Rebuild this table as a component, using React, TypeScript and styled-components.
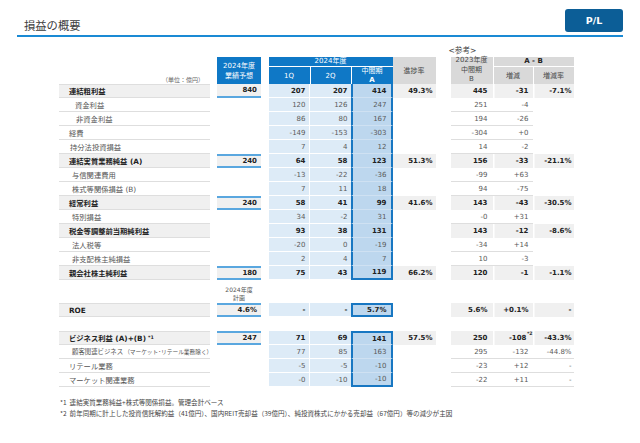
import React from 'react';
import styled, { createGlobalStyle, css } from 'styled-components';

const GlobalStyle = createGlobalStyle`
  html, body { margin: 0; padding: 0; background: #ffffff; }
  body { font-family: "DejaVu Sans", "Noto Sans CJK JP", sans-serif; -webkit-font-smoothing: antialiased; }
`;

const GRID = '151px 7px 44px 7.5px 41px 41px 42px 43px 15px 42px 40px 41px';
const BLUE = '#0f78c6';
const MIDBORDER = '#1877c2';
const LINEBLUE = '#5aa7df';
const GRAYBG = '#f0f0f0';
const HEADGRAY = '#d9d9d9';

const Page = styled.div`
  width: 640px;
  height: 443px;
  overflow: hidden;
`;

const TitleBar = styled.header`
  display: flex;
  justify-content: space-between;
  align-items: flex-start;
  box-sizing: border-box;
  height: 37px;
  margin: 0 17px;
  padding-top: 9px;
  border-bottom: 2px solid #1a8ad4;
`;

const Title = styled.h1`
  margin: 10px 0 0 7px;
  font-family: "Noto Sans CJK JP", sans-serif;
  font-weight: 400;
  font-size: 11.3px;
  line-height: 13px;
  color: #3c3c3c;
`;

const PLButton = styled.div`
  width: 58px;
  height: 23px;
  border-radius: 3px;
  background: #0c5e97;
  color: #ffffff;
  font-family: "DejaVu Sans", sans-serif;
  font-weight: 700;
  font-size: 9.5px;
  display: flex;
  align-items: center;
  justify-content: center;
`;

const Table = styled.div`
  margin-left: 59px;
  width: 515px;
`;

const GridRow = styled.div<{ $h: number }>`
  display: grid;
  grid-template-columns: ${GRID};
  height: ${(p) => p.$h}px;
`;

const CaptionCell = styled.div`
  grid-column: 10 / 13;
  align-self: end;
  margin-left: -2px;
  font-family: "DejaVu Sans", "Noto Sans CJK JP", sans-serif;
  font-size: 7.6px;
  line-height: 13px;
  color: #444;
`;

const HeaderGrid = styled.div`
  display: grid;
  grid-template-columns: ${GRID};
  grid-template-rows: 9px 18px;
  height: 27px;
`;

const HeadCell = styled.div<{ $col: string; $row: string; $tone: 'blue' | 'gray'; $sepLeft?: boolean; $sepTop?: boolean; $bold?: boolean; $lh?: number }>`
  grid-column: ${(p) => p.$col};
  grid-row: ${(p) => p.$row};
  box-sizing: border-box;
  display: flex;
  flex-direction: column;
  align-items: center;
  justify-content: center;
  text-align: center;
  background: ${(p) => (p.$tone === 'blue' ? BLUE : HEADGRAY)};
  color: ${(p) => (p.$tone === 'blue' ? '#ffffff' : p.$bold ? '#222' : '#4a4a4a')};
  font-size: 7px;
  font-weight: ${(p) => (p.$bold ? 700 : 400)};
  line-height: ${(p) => p.$lh ?? 10}px;
  white-space: nowrap;
  ${(p) => p.$sepLeft && css`border-left: 1px solid #ffffff;`}
  ${(p) => p.$sepTop && css`border-top: 1px solid #ffffff;`}
`;

const UnitCell = styled.div`
  grid-column: 1;
  grid-row: 1 / 3;
  align-self: end;
  justify-self: end;
  padding: 0 6px 1px 0;
  font-family: "Noto Sans CJK JP", sans-serif;
  font-size: 6px;
  line-height: 7px;
  color: #666;
`;

const Gap = styled.div``;

const numBase = css`
  box-sizing: border-box;
  display: flex;
  align-items: center;
  justify-content: flex-end;
  font-size: 7px;
  white-space: nowrap;
`;

const LabelCell = styled.div<{ $bold?: boolean; $indent: number; $top?: boolean }>`
  box-sizing: border-box;
  display: flex;
  align-items: center;
  padding-left: ${(p) => p.$indent}px;
  background: ${(p) => (p.$bold ? GRAYBG : '#ffffff')};
  border-bottom: 1px solid #dedede;
  ${(p) => p.$top && css`border-top: 1px solid #dedede;`}
  font-size: 7.3px;
  font-weight: ${(p) => (p.$bold ? 700 : 400)};
  color: ${(p) => (p.$bold ? '#222' : '#555')};
  white-space: nowrap;
`;

const SmallMain = styled.span`
  font-size: 6.4px;
`;

const SmallParen = styled.span`
  font-size: 5.7px;
  margin-left: 1px;
`;

const Sup = styled.sup`
  font-size: 4.8px;
  font-weight: 700;
  vertical-align: top;
  line-height: 1;
  margin-left: 2px;
  margin-top: 1px;
`;

const FcCell = styled.div<{ $filled?: boolean; $noTop?: boolean }>`
  ${numBase};
  padding-right: 4px;
  font-weight: 700;
  color: #222;
  ${(p) =>
    p.$filled &&
    css`
      background: ${GRAYBG};
      border-bottom: 2px solid ${LINEBLUE};
      border-top: ${p.$noTop ? '0' : `2px solid ${LINEBLUE}`};
    `}
`;

const FcPlanHead = styled.div`
  grid-column: 3;
  padding-top: 6px;
  text-align: center;
  font-size: 6px;
  line-height: 7.5px;
  color: #555;
  white-space: nowrap;
`;

const QCell = styled.div<{ $bold?: boolean; $first?: boolean }>`
  ${numBase};
  padding-right: 3px;
  background: #ddebf7;
  border-bottom: 1px solid #ffffff;
  ${(p) => p.$first && css`border-right: 1px solid #ffffff;`}
  font-weight: ${(p) => (p.$bold ? 700 : 400)};
  color: ${(p) => (p.$bold ? '#222' : '#5a5a5a')};
`;

const MidCell = styled.div<{ $bold?: boolean; $top?: boolean; $bottom?: boolean }>`
  ${numBase};
  padding-right: 4px;
  background: #bdd7ee;
  border-left: 2px solid ${MIDBORDER};
  border-right: 2px solid ${MIDBORDER};
  border-bottom: ${(p) => (p.$bottom ? `2px solid ${MIDBORDER}` : '1px solid #cfe1f2')};
  ${(p) => p.$top && css`border-top: 2px solid ${MIDBORDER};`}
  font-weight: ${(p) => (p.$bold ? 700 : 400)};
  color: ${(p) => (p.$bold ? '#222' : '#5a5a5a')};
`;

const ProgCell = styled.div<{ $filled?: boolean }>`
  ${numBase};
  padding-right: 3px;
  font-weight: 700;
  color: #222;
  background: ${(p) => (p.$filled ? GRAYBG : 'transparent')};
`;

const RefCell = styled.div<{ $bold?: boolean; $line?: boolean; $sep?: boolean; $pad: number }>`
  ${numBase};
  position: relative;
  padding-right: ${(p) => p.$pad}px;
  font-weight: ${(p) => (p.$bold ? 700 : 400)};
  color: ${(p) => (p.$bold ? '#222' : '#5a5a5a')};
  ${(p) =>
    p.$bold &&
    css`
      background: ${GRAYBG};
      ${p.$sep ? 'box-shadow: inset 1.5px 0 0 #ffffff;' : ''}
    `}
  ${(p) => !p.$bold && p.$line && css`border-bottom: 1px solid #dedede;`}
`;

const NoteMark = styled.span`
  position: absolute;
  right: 0;
  top: 0;
  font-size: 4.6px;
  line-height: 5px;
  font-weight: 700;
  color: #333;
`;

const Spacer = styled.div<{ $h: number }>`
  height: ${(p) => p.$h}px;
`;

const Notes = styled.div`
  margin: 9.5px 0 0 60px;
  font-family: "Noto Sans CJK JP", sans-serif;
  font-size: 6.55px;
  line-height: 11px;
  color: #444;
  white-space: nowrap;
`;

type RowData = {
  label: React.ReactNode;
  bold?: boolean;
  indent: number;
  fc?: string;
  q1: string;
  q2: string;
  mid: string;
  prog?: string;
  prev: string;
  diff: string;
  diffNote?: string;
  rate?: string;
};

const section1: RowData[] = [
  { label: '連結粗利益', bold: true, indent: 10, fc: '840', q1: '207', q2: '207', mid: '414', prog: '49.3%', prev: '445', diff: '-31', rate: '-7.1%' },
  { label: '資金利益', indent: 16, q1: '120', q2: '126', mid: '247', prev: '251', diff: '-4' },
  { label: '非資金利益', indent: 17, q1: '86', q2: '80', mid: '167', prev: '194', diff: '-26' },
  { label: '経費', indent: 10, q1: '-149', q2: '-153', mid: '-303', prev: '-304', diff: '+0' },
  { label: '持分法投資損益', indent: 11, q1: '7', q2: '4', mid: '12', prev: '14', diff: '-2' },
  { label: '連結実質業務純益 (A)', bold: true, indent: 10, fc: '240', q1: '64', q2: '58', mid: '123', prog: '51.3%', prev: '156', diff: '-33', rate: '-21.1%' },
  { label: '与信関連費用', indent: 13, q1: '-13', q2: '-22', mid: '-36', prev: '-99', diff: '+63' },
  { label: '株式等関係損益 (B)', indent: 13, q1: '7', q2: '11', mid: '18', prev: '94', diff: '-75' },
  { label: '経常利益', bold: true, indent: 10, fc: '240', q1: '58', q2: '41', mid: '99', prog: '41.6%', prev: '143', diff: '-43', rate: '-30.5%' },
  { label: '特別損益', indent: 13, q1: '34', q2: '-2', mid: '31', prev: '-0', diff: '+31' },
  { label: '税金等調整前当期純利益', bold: true, indent: 10, q1: '93', q2: '38', mid: '131', prev: '143', diff: '-12', rate: '-8.6%' },
  { label: '法人税等', indent: 13, q1: '-20', q2: '0', mid: '-19', prev: '-34', diff: '+14' },
  { label: '非支配株主純損益', indent: 13, q1: '2', q2: '4', mid: '7', prev: '10', diff: '-3' },
  { label: '親会社株主純利益', bold: true, indent: 10, fc: '180', q1: '75', q2: '43', mid: '119', prog: '66.2%', prev: '120', diff: '-1', rate: '-1.1%' },
];

const section2: RowData[] = [
  {
    label: (
      <>
        ビジネス利益 (A)+(B)<Sup>*1</Sup>
      </>
    ),
    bold: true,
    indent: 10,
    fc: '247',
    q1: '71',
    q2: '69',
    mid: '141',
    prog: '57.5%',
    prev: '250',
    diff: '-108',
    diffNote: '*2',
    rate: '-43.3%',
  },
  {
    label: (
      <>
        <SmallMain>顧客関連ビジネス</SmallMain>
        <SmallParen>（マーケット･リテール業務除く）</SmallParen>
      </>
    ),
    indent: 13,
    q1: '77',
    q2: '85',
    mid: '163',
    prev: '295',
    diff: '-132',
    rate: '-44.8%',
  },
  { label: 'リテール業務', indent: 10, q1: '-5', q2: '-5', mid: '-10', prev: '-23', diff: '+12', rate: '-' },
  { label: 'マーケット関連業務', indent: 10, q1: '-0', q2: '-10', mid: '-10', prev: '-22', diff: '+11', rate: '-' },
];

type SectionProps = { rows: RowData[]; firstUnderHeader?: boolean };

const Section: React.FC<SectionProps> = ({ rows, firstUnderHeader }) => (
  <>
    {rows.map((r, i) => {
      const first = i === 0;
      const last = i === rows.length - 1;
      return (
        <GridRow $h={14} key={i}>
          <LabelCell $bold={r.bold} $indent={r.indent} $top={first}>
            {r.label}
          </LabelCell>
          <Gap />
          <FcCell $filled={!!r.fc} $noTop={first && firstUnderHeader}>
            {r.fc}
          </FcCell>
          <Gap />
          <QCell $bold={r.bold} $first>
            {r.q1}
          </QCell>
          <QCell $bold={r.bold}>{r.q2}</QCell>
          <MidCell $bold={r.bold} $top={first && !firstUnderHeader} $bottom={last}>
            {r.mid}
          </MidCell>
          <ProgCell $filled={!!r.prog}>{r.prog}</ProgCell>
          <Gap />
          <RefCell $bold={r.bold} $line $pad={5}>
            {r.prev}
          </RefCell>
          <RefCell $bold={r.bold} $line $sep $pad={r.diffNote ? 6 : 4}>
            {r.diff}
            {r.diffNote && <NoteMark>{r.diffNote}</NoteMark>}
          </RefCell>
          <RefCell $bold={r.bold} $line={r.rate !== undefined} $sep $pad={2}>
            {r.rate}
          </RefCell>
        </GridRow>
      );
    })}
  </>
);

export default function App() {
  return (
    <Page>
      <GlobalStyle />
      <TitleBar>
        <Title>損益の概要</Title>
        <PLButton>P/L</PLButton>
      </TitleBar>

      <Table>
        <GridRow $h={20}>
          <CaptionCell>&lt;参考&gt;</CaptionCell>
        </GridRow>

        <HeaderGrid>
          <UnitCell>（単位：億円）</UnitCell>
          <HeadCell $col="3" $row="1 / 3" $tone="blue">
            <span>2024年度</span>
            <span>業績予想</span>
          </HeadCell>
          <HeadCell $col="5 / 8" $row="1" $tone="blue" $lh={9}>
            2024年度
          </HeadCell>
          <HeadCell $col="5" $row="2" $tone="blue" $sepTop>
            1Q
          </HeadCell>
          <HeadCell $col="6" $row="2" $tone="blue" $sepTop $sepLeft>
            2Q
          </HeadCell>
          <HeadCell $col="7" $row="2" $tone="blue" $sepTop $sepLeft $lh={9}>
            <span>中間期</span>
            <b>A</b>
          </HeadCell>
          <HeadCell $col="8" $row="1 / 3" $tone="gray">
            進捗率
          </HeadCell>
          <HeadCell $col="10" $row="1 / 3" $tone="gray" $lh={9.6}>
            <span>2023年度</span>
            <span>中間期</span>
            <span>B</span>
          </HeadCell>
          <HeadCell $col="11 / 13" $row="1" $tone="gray" $sepLeft $bold $lh={9}>
            A - B
          </HeadCell>
          <HeadCell $col="11" $row="2" $tone="gray" $sepTop $sepLeft>
            増減
          </HeadCell>
          <HeadCell $col="12" $row="2" $tone="gray" $sepTop $sepLeft>
            増減率
          </HeadCell>
        </HeaderGrid>

        <Section rows={section1} firstUnderHeader />

        <GridRow $h={23}>
          <FcPlanHead>
            2024年度
            <br />
            計画
          </FcPlanHead>
        </GridRow>

        <GridRow $h={14}>
          <LabelCell $bold $indent={10} $top>
            ROE
          </LabelCell>
          <Gap />
          <FcCell $filled>4.6%</FcCell>
          <Gap />
          <QCell $bold $first>
            -
          </QCell>
          <QCell $bold>-</QCell>
          <MidCell $bold $top $bottom>
            5.7%
          </MidCell>
          <ProgCell />
          <Gap />
          <RefCell $bold $pad={5}>
            5.6%
          </RefCell>
          <RefCell $bold $sep $pad={4}>
            +0.1%
          </RefCell>
          <RefCell $bold $sep $pad={2}>
            -
          </RefCell>
        </GridRow>

        <Spacer $h={14} />

        <Section rows={section2} />
      </Table>

      <Notes>
        <div>*1&nbsp;&nbsp;連結実質業務純益+株式等関係損益。管理会計ベース</div>
        <div>*2&nbsp;&nbsp;前年同期に計上した投資信託解約益（41億円）、国内REIT売却益（39億円）、純投資株式にかかる売却益（67億円）等の減少が主因</div>
      </Notes>
    </Page>
  );
}
